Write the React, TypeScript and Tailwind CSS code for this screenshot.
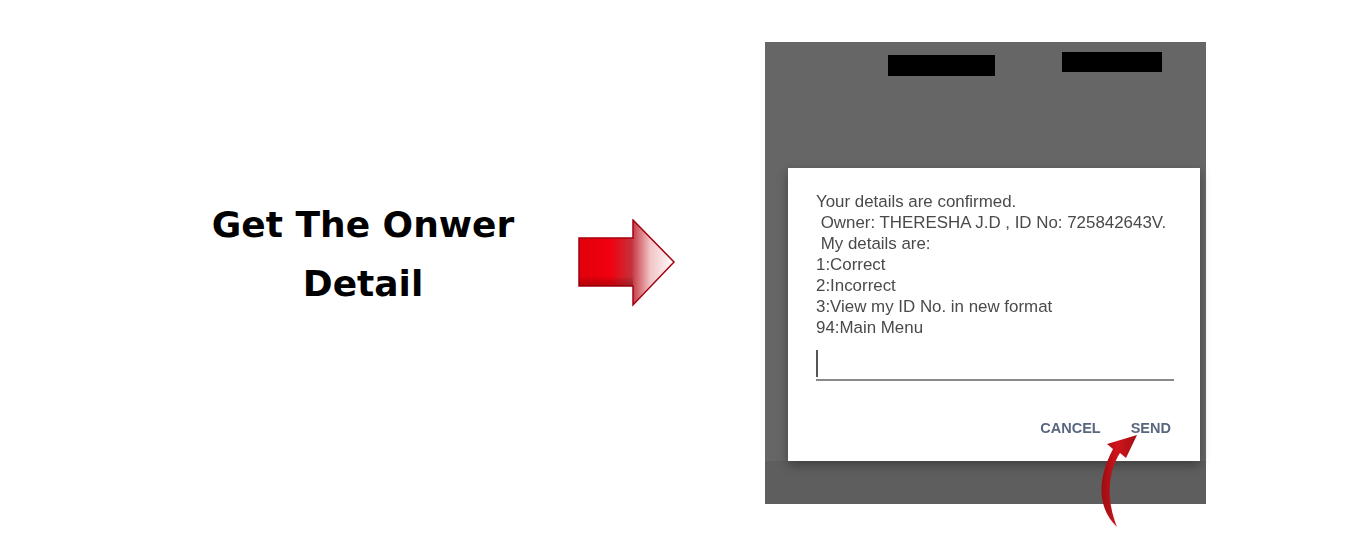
import React from "react";

function BigArrow() {
  return (
    <svg width="98" height="88" viewBox="0 0 98 88">
      <defs>
        <linearGradient id="ag" x1="0" y1="0" x2="1" y2="0">
          <stop offset="0" stopColor="#e0000a" />
          <stop offset="0.33" stopColor="#f2000f" />
          <stop offset="0.55" stopColor="#c4303a" />
          <stop offset="0.75" stopColor="#f1c4c6" />
          <stop offset="1" stopColor="#ffffff" />
        </linearGradient>
        <linearGradient id="ag2" x1="0" y1="0" x2="0" y2="1">
          <stop offset="0" stopColor="#000" stopOpacity="0" />
          <stop offset="0.8" stopColor="#000" stopOpacity="0" />
          <stop offset="1" stopColor="#600" stopOpacity="0.35" />
        </linearGradient>
      </defs>
      <path
        d="M1 19 L55 19 L55 1 L96 43 L55 86 L55 67 L1 67 Z"
        fill="url(#ag)"
        stroke="#a40010"
        strokeWidth="1.5"
        strokeLinejoin="miter"
      />
      <path d="M1 19 L55 19 L55 67 L1 67 Z" fill="url(#ag2)" />
    </svg>
  );
}

function CurvedArrow() {
  return (
    <svg width="70" height="110" viewBox="0 0 70 110">
      <defs>
        <linearGradient id="cg" x1="0" y1="0" x2="1" y2="0">
          <stop offset="0" stopColor="#9a0d12" />
          <stop offset="0.45" stopColor="#d0141c" />
          <stop offset="1" stopColor="#a10f14" />
        </linearGradient>
      </defs>
      <path
        d="M52 10 L41 33 L35 28 C 24 45, 20 72, 32 102 C 17 88, 8 62, 28 24 L 22 19 Z"
        fill="url(#cg)"
      />
    </svg>
  );
}

export default function App() {
  const lines = [
    "Your details are confirmed.",
    "\u00a0Owner: THERESHA J.D , ID No: 725842643V.",
    "\u00a0My details are:",
    "1:Correct",
    "2:Incorrect",
    "3:View my ID No. in new format",
    "94:Main Menu",
  ];
  return (
    <div className="w-[1366px] h-[536px] bg-white flex overflow-hidden">
      <div className="w-[346px] ml-[190px] mt-[195px] text-center text-black font-bold text-[36px] leading-[59px] font-['DejaVu_Sans',sans-serif]">
        Get The Onwer
        <br />
        Detail
      </div>
      <div className="ml-[42px] mt-[219px]">
        <BigArrow />
      </div>
      <div className="relative ml-[89px] mt-[42px] w-[441px] h-[462px] bg-[#666666] flex flex-col">
        <div className="absolute left-[123px] top-[13px] w-[107px] h-[21px] bg-black" />
        <div className="absolute left-[297px] top-[10px] w-[100px] h-[20px] bg-black" />
        <div className="relative z-10 mt-[126px] ml-[23px] w-[412px] h-[293px] bg-white shadow-[0_4px_10px_rgba(0,0,0,0.35)] flex flex-col pl-[28px] pr-[26px] pt-[23px] font-['Liberation_Sans',Arial,sans-serif]">
          <div className="text-[16.9px] leading-[21px] text-[#4a4a4a] blur-[0.3px]">
            {lines.map((l, i) => (
              <div key={i} className="whitespace-pre">
                {l}
              </div>
            ))}
          </div>
          <div className="mt-[12px] h-[31px] border-b-2 border-[#8a8a8a] flex items-start">
            <div className="w-[2px] h-[27px] bg-[#555]" />
          </div>
          <div className="mt-[37px] flex justify-end gap-[30px] pr-[3px] text-[14.5px] leading-[20px] font-bold text-[#5a6780] blur-[0.3px]">
            <span>CANCEL</span>
            <span>SEND</span>
          </div>
        </div>
        <div className="flex-1 bg-[#5e5e5e]" />
      </div>
      <div className="absolute left-[1085px] top-[425px] z-20">
        <CurvedArrow />
      </div>
    </div>
  );
}
